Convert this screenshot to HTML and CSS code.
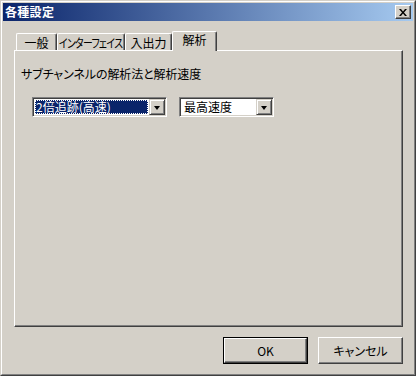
FILE: index.html
```html
<!DOCTYPE html>
<html lang="ja">
<head>
<meta charset="utf-8">
<link rel="stylesheet" href="styles.css">
</head>
<body>
<div class="window">
  <div class="frame">
    <div class="titlebar">
      <span class="title">各種設定</span>
      <span class="close">
        <svg width="8" height="7" viewBox="0 0 8 7"><path d="M0 0h2l2 2.5L6 0h2L5 3.5 8 7H6L4 4.5 2 7H0l3-3.5z" fill="#000"/></svg>
      </span>
    </div>
    <div class="content">
      <div class="tabs">
        <div class="tab t1">一般</div>
        <div class="tab t2"><span class="narrow">インターフェイス</span></div>
        <div class="tab t3">入出力</div>
        <div class="tab active">解析</div>
      </div>
      <div class="panel">
        <div class="label">サブチャンネルの解析法と解析速度</div>
        <div class="selects">
          <div class="combo c1">
            <div class="value selected"><span>2倍追跡(高速)</span></div>
            <div class="drop"><i></i></div>
          </div>
          <div class="combo c2">
            <div class="value">最高速度</div>
            <div class="drop"><i></i></div>
          </div>
        </div>
      </div>
      <div class="buttons">
        <div class="btn default"><div class="face">OK</div></div>
        <div class="btn"><div class="face">キャンセル</div></div>
      </div>
    </div>
  </div>
</div>
</body>
</html>
```

FILE: styles.css
```css
html, body {
  margin: 0;
  padding: 0;
  background: #d4d0c8;
}
body {
  font-family: "Noto Sans CJK JP", "Liberation Sans", sans-serif;
  font-size: 12px;
  color: #000;
  font-feature-settings: "palt";
}
.window {
  box-sizing: border-box;
  width: 416px;
  height: 376px;
  border-style: solid;
  border-width: 1px;
  border-color: #d4d0c8 #404040 #404040 #d4d0c8;
}
.frame {
  box-sizing: border-box;
  height: 100%;
  border-style: solid;
  border-width: 1px;
  border-color: #fff #808080 #808080 #fff;
  padding: 1px;
  display: flex;
  flex-direction: column;
}
.titlebar {
  height: 18px;
  background: linear-gradient(to right, #0a246a, #a6caf0);
  display: flex;
  align-items: center;
  justify-content: space-between;
  padding: 0 2px 0 2px;
}
.title {
  color: #fff;
  font-weight: bold;
  line-height: 14px;
  letter-spacing: 0.3px;
}
.close {
  box-sizing: border-box;
  width: 16px;
  height: 14px;
  background: #d4d0c8;
  border-style: solid;
  border-width: 1px;
  border-color: #fff #404040 #404040 #fff;
  box-shadow: inset -1px -1px 0 #808080;
  display: flex;
  align-items: center;
  justify-content: center;
  padding-right: 1px;
}
.close svg { display: block; }
.content {
  flex: 1;
  display: flex;
  flex-direction: column;
  padding: 10px 10px 0 11px;
}
.tabs {
  display: flex;
  align-items: flex-end;
  height: 19px;
  padding-left: 2px;
  position: relative;
  z-index: 1;
}
.tab {
  box-sizing: border-box;
  flex: none;
  height: 17px;
  border-style: solid;
  border-width: 1px 1px 0 1px;
  border-color: #fff #404040 #fff #fff;
  border-radius: 2px 2px 0 0;
  box-shadow: inset -1px 0 0 #808080;
  display: flex;
  align-items: center;
  justify-content: center;
  line-height: 14px;
  padding-top: 1px;
  white-space: nowrap;
  overflow: hidden;
}
.t1 { width: 41px; }
.t2 { width: 68px; padding-right: 1px; }
.narrow {
  display: inline-block;
  letter-spacing: -0.8px;
  transform: scaleX(0.82);
}
.t3 { width: 47px; }
.tab.active {
  width: 45px;
  height: 20px;
  margin-bottom: -1px;
  background: #d4d0c8;
  padding-top: 0;
  padding-bottom: 3px;
}
.panel {
  box-sizing: border-box;
  width: 389px;
  height: 277px;
  border-style: solid;
  border-width: 1px;
  border-color: #fff #404040 #404040 #fff;
  box-shadow: inset -1px -1px 0 #808080;
  padding: 16px 6px 0 6px;
}
.label {
  line-height: 14px;
  letter-spacing: -0.1px;
}
.selects {
  display: flex;
  gap: 12px;
  margin-top: 16px;
  padding-left: 11px;
}
.combo {
  box-sizing: border-box;
  height: 20px;
  border-style: solid;
  border-width: 1px;
  border-color: #808080 #fff #fff #808080;
  box-shadow: inset 1px 1px 0 #404040, inset -1px -1px 0 #d4d0c8;
  background: #fff;
  padding: 2px;
  display: flex;
}
.c1 { width: 135px; }
.c2 { width: 95px; }
.value {
  flex: 1;
  line-height: 14px;
  padding-left: 2px;
  display: flex;
  align-items: center;
  white-space: nowrap;
}
.value.selected {
  background: #0a246a;
  color: #fff;
  outline: 1px dotted #fff;
  outline-offset: -1px;
  margin: 0 1px 0 0;
  padding-left: 1px;
}
.drop {
  box-sizing: border-box;
  width: 16px;
  height: 16px;
  margin: -1px -1px -1px 0;
  background: #d4d0c8;
  border-style: solid;
  border-width: 1px;
  border-color: #d4d0c8 #404040 #404040 #d4d0c8;
  box-shadow: inset 1px 1px 0 #fff, inset -1px -1px 0 #808080;
  display: flex;
  align-items: center;
  justify-content: center;
}
.drop i {
  display: block;
  width: 0;
  height: 0;
  border-left: 3.5px solid transparent;
  border-right: 3.5px solid transparent;
  border-top: 4px solid #000;
  margin-top: 1px;
}
.buttons {
  display: flex;
  justify-content: flex-end;
  gap: 10px;
  margin-top: 10px;
  width: 389px;
}
.btn {
  box-sizing: border-box;
  width: 85px;
  height: 27px;
  border-style: solid;
  border-width: 1px;
  border-color: #fff #404040 #404040 #fff;
  box-shadow: inset -1px -1px 0 #808080;
  display: flex;
}
.btn.default {
  border: 1px solid #000;
  box-shadow: none;
}
.btn .face {
  flex: 1;
  display: flex;
  align-items: center;
  justify-content: center;
  line-height: 14px;
}
.btn.default .face {
  border-style: solid;
  border-width: 1px;
  border-color: #fff #404040 #404040 #fff;
  box-shadow: inset -1px -1px 0 #808080;
}
```
